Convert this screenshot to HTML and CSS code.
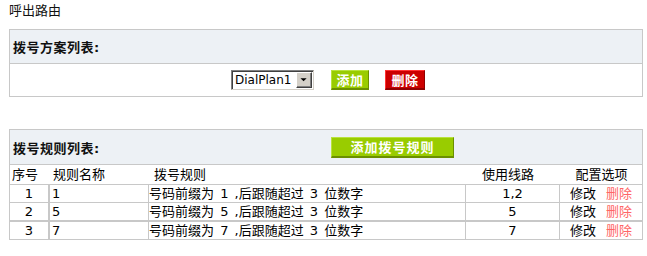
FILE: index.html
```
<!DOCTYPE html>
<html lang="zh-CN">
<head>
<meta charset="utf-8">
<title>呼出路由</title>
<link rel="stylesheet" href="styles.css">
</head>
<body>
<div class="title">呼出路由</div>

<section class="box plan">
  <div class="box-head"><h2>拨号方案列表:</h2></div>
  <div class="plan-body">
    <div class="select">
      <span class="select-text">DialPlan1</span>
      <span class="select-arrow"><svg width="16" height="17" viewBox="0 0 16 17"><polygon points="4,7 11,7 7.5,10.5" fill="#000"/></svg></span>
    </div>
    <button class="btn btn-green">添加</button>
    <button class="btn btn-red">删除</button>
  </div>
</section>

<section class="box rules">
  <div class="box-head rules-head"><h2>拨号规则列表:</h2><button class="btn btn-green btn-wide">添加拨号规则</button></div>
  <div class="row col-head">
    <div class="c1">序号</div>
    <div class="c2">规则名称</div>
    <div class="c3">拨号规则</div>
    <div class="c4">使用线路</div>
    <div class="c5">配置选项</div>
  </div>
  <div class="row data">
    <div class="c1">1</div>
    <div class="c2">1</div>
    <div class="c3">号码前缀为 1 ,后跟随超过 3 位数字</div>
    <div class="c4">1,2</div>
    <div class="c5"><a class="edit">修改</a><a class="del">删除</a></div>
  </div>
  <div class="row data sep2">
    <div class="c1">2</div>
    <div class="c2">5</div>
    <div class="c3">号码前缀为 5 ,后跟随超过 3 位数字</div>
    <div class="c4">5</div>
    <div class="c5"><a class="edit">修改</a><a class="del">删除</a></div>
  </div>
  <div class="row data last">
    <div class="c1">3</div>
    <div class="c2">7</div>
    <div class="c3">号码前缀为 7 ,后跟随超过 3 位数字</div>
    <div class="c4">7</div>
    <div class="c5"><a class="edit">修改</a><a class="del">删除</a></div>
  </div>
</section>
</body>
</html>
```

FILE: styles.css
```
* { box-sizing: border-box; }
body {
  margin: 0;
  background: #fff;
  color: #000;
  font-family: "DejaVu Sans", "Noto Sans CJK SC", sans-serif;
  font-size: 13px;
}
.title {
  font-size: 13px;
  height: 20px;
  line-height: 21px;
  padding-left: 9px;
  color: #111;
  margin-bottom: 9px;
}
.box {
  margin-left: 9px;
  width: 634px;
  border: 1px solid #c8c8c8;
}
.box-head {
  height: 34px;
  background: #edf1f5;
  border-bottom: 1px solid #c8c8c8;
  display: flex;
  align-items: center;
  padding-left: 3px;
}
.box-head h2 {
  margin: 0;
  font-size: 13px;
  font-weight: bold;
  letter-spacing: 0.5px;
  color: #111;
}
.plan-body {
  height: 32px;
  display: flex;
  align-items: center;
  justify-content: center;
  padding-left: 4px;
}
.select {
  width: 83px;
  height: 20px;
  display: flex;
  align-items: center;
  border-style: solid;
  border-width: 1px;
  border-color: #808080 #d4d0c8 #d4d0c8 #808080;
  box-shadow: inset 1px 1px 0 #404040, inset -1px -1px 0 #fff;
  background: #fff;
  padding: 1px 1px 1px 3px;
  margin-right: 17px;
}
.select-text {
  flex: 1;
  font-size: 12px;
  line-height: 16px;
  color: #000;
}
.select-arrow {
  width: 16px;
  height: 16px;
  background: #d4d0c8;
  border-style: solid;
  border-width: 1px;
  border-color: #fff #404040 #404040 #fff;
  box-shadow: inset -1px -1px 0 #808080;
  display: flex;
  align-items: center;
  justify-content: center;
  overflow: hidden;
}
.select-arrow svg { display: block; margin-top: -1px; }
.btn {
  height: 20px;
  padding: 0;
  border-style: solid;
  border-width: 1px 1px 2px 1px;
  color: #fff;
  font-family: "Noto Sans CJK SC", sans-serif;
  font-weight: bold;
  font-size: 13px;
  line-height: 16px;
  letter-spacing: 0.5px;
  text-align: center;
}
.btn-green {
  width: 38px;
  background: #99cc00;
  border-color: #b8e23c #6b8f00 #6b8f00 #b8e23c;
  margin-right: 16px;
}
.btn-red {
  width: 40px;
  background: #cc0000;
  border-color: #ff3333 #8f0000 #8f0000 #ff3333;
}
.rules { margin-top: 32px; }
.rules-head { height: 35px; }
.rules-head h2 { width: 318px; }
.btn-wide {
  width: 123px;
  height: 21px;
  margin-right: 0;
  letter-spacing: 1px;
}
.row {
  display: grid;
  grid-template-columns: 38px 100px 317px 94px 83px;
  border-bottom: 1px solid #c8c8c8;
}
.row > div { white-space: nowrap; overflow: hidden; }
.col-head { height: 20px; line-height: 19px; }
.col-head .c1 { padding-left: 2px; }
.col-head .c2 { padding-left: 5px; }
.col-head .c3 { padding-left: 6px; }
.col-head .c4 { text-align: center; padding-right: 8px; }
.col-head .c5 { text-align: center; padding-left: 2px; }
.data { height: 18px; line-height: 17px; }
.data.sep2 { height: 19px; border-bottom-width: 2px; }
.data.last { height: 17px; border-bottom: 0; }
.data .c1 { text-align: center; }
.data .c2 { border-left: 2px solid #c8c8c8; padding-left: 2px; }
.data .c3 { border-left: 1px solid #c8c8c8; word-spacing: 2px; }
.data .c4 { border-left: 1px solid #c8c8c8; text-align: center; }
.data .c5 { border-left: 1px solid #c8c8c8; text-align: center; }
.edit { color: #000; }
.del { color: #ff6666; margin-left: 10px; }
```
